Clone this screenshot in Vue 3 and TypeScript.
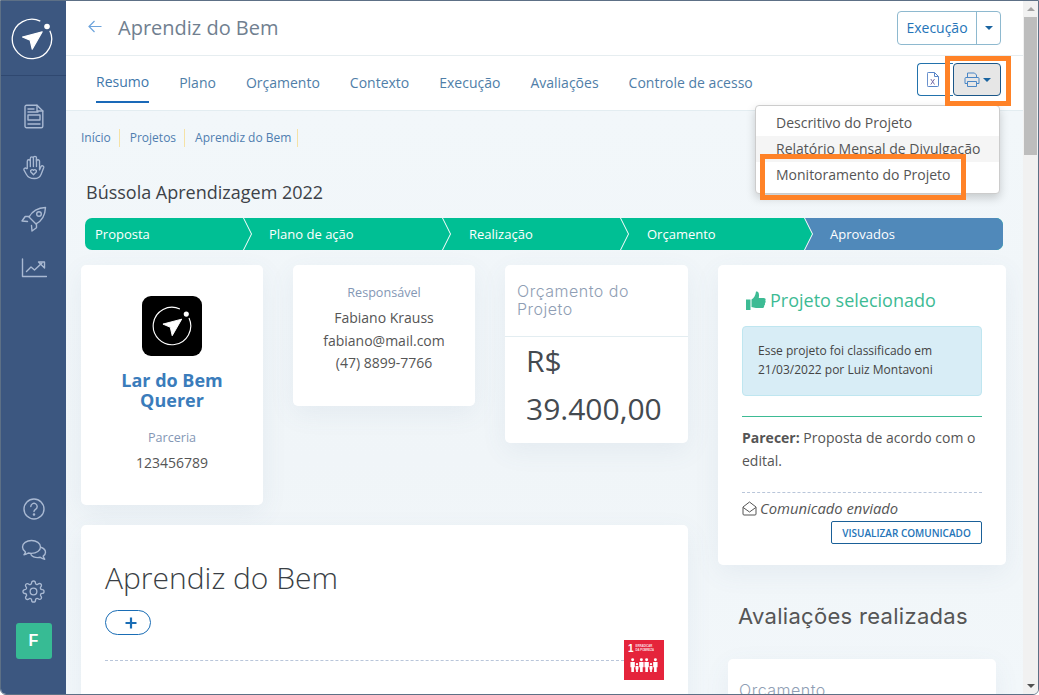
<script setup lang="ts">
const tabs: string[] = ['Resumo', 'Plano', 'Orçamento', 'Contexto', 'Execução', 'Avaliações', 'Controle de acesso']
const crumbs: string[] = ['Início', 'Projetos', 'Aprendiz do Bem']
const steps: string[] = ['Proposta', 'Plano de ação', 'Realização', 'Orçamento', 'Aprovados']
const menu: string[] = ['Descritivo do Projeto', 'Relatório Mensal de Divulgação', 'Monitoramento do Projeto']
const gear =
  'M19.4 15a1.65 1.65 0 0 0 .33 1.82l.06.06a2 2 0 0 1 0 2.83 2 2 0 0 1-2.83 0l-.06-.06a1.65 1.65 0 0 0-1.82-.33 1.65 1.65 0 0 0-1 1.51V21a2 2 0 0 1-2 2 2 2 0 0 1-2-2v-.09A1.65 1.65 0 0 0 9 19.4a1.65 1.65 0 0 0-1.82.33l-.06.06a2 2 0 0 1-2.83 0 2 2 0 0 1 0-2.83l.06-.06a1.65 1.65 0 0 0 .33-1.82 1.65 1.65 0 0 0-1.51-1H3a2 2 0 0 1-2-2 2 2 0 0 1 2-2h.09A1.65 1.65 0 0 0 4.6 9a1.65 1.65 0 0 0-.33-1.82l-.06-.06a2 2 0 0 1 0-2.83 2 2 0 0 1 2.83 0l.06.06a1.65 1.65 0 0 0 1.82.33H9a1.65 1.65 0 0 0 1-1.51V3a2 2 0 0 1 2-2 2 2 0 0 1 2 2v.09a1.65 1.65 0 0 0 1 1.51 1.65 1.65 0 0 0 1.82-.33l.06-.06a2 2 0 0 1 2.83 0 2 2 0 0 1 0 2.83l-.06.06a1.65 1.65 0 0 0-.33 1.82V9a1.65 1.65 0 0 0 1.51 1H21a2 2 0 0 1 2 2 2 2 0 0 1-2 2h-.09a1.65 1.65 0 0 0-1.51 1z'
</script>

<template>
  <div class="window">
    <aside class="sidebar">
      <div class="brand">
        <svg width="42" height="42" viewBox="0 0 42 42" fill="none">
          <path d="M29.3 3.100A19.700 19.700 0 1 0 38.850 12.700" stroke="#fff" stroke-width="1.300" />
          <circle cx="36" cy="8.500" r="2.800" fill="#fff" />
          <path d="M11.500 19 31.200 13.800 21.200 31.200 19.200 22.300Z" fill="#fff" stroke="#fff" stroke-width="1.200" stroke-linejoin="round" />
        </svg>
      </div>
      <nav class="nav-top">
        <svg width="20" height="25" viewBox="0 0 20 25" fill="none" class="ico">
          <path d="M2.500 1.200h10.500l5.800 5.800v15.300a1.500 1.500 0 0 1-1.500 1.500H2.500A1.500 1.500 0 0 1 1 22.300V2.700a1.500 1.500 0 0 1 1.500-1.500Z" />
          <path d="M13 1.200V7h5.800M4 5h6M4 8h10M4 20h12" />
          <rect x="4" y="11" width="12" height="5" />
        </svg>
        <svg width="23" height="25" viewBox="0 0 24 26" fill="none" class="ico">
          <path d="M5.500 14V6.500a1.600 1.600 0 0 1 3.200 0V3.500a1.600 1.600 0 0 1 3.200 0V3a1.600 1.600 0 0 1 3.200 0v3.500a1.600 1.600 0 0 1 3.200 0v9l1.600-3.500a1.500 1.500 0 0 1 2.800 1L20 20c-1.200 3-3.500 4.500-7 4.500-5 0-7-1.500-8.500-4.500L2 15.500a1.500 1.500 0 0 1 2.500-1.500Z" />
          <path d="M8.700 7v5M11.900 4v8M15.100 4v8" />
          <path d="M12 20.500l-3-3a1.700 1.700 0 0 1 3-1.500 1.700 1.700 0 0 1 3 1.500Z" />
        </svg>
        <svg width="26" height="26" viewBox="0 0 26 26" fill="none" class="ico">
          <path d="M8 11C11 5.500 17 1.800 24.500 1.500 24.200 9 20.500 15 15 18l-7-7Z" />
          <circle cx="18" cy="8" r="2.300" />
          <path d="M8.500 10.500H4.200L1 15l5.500.5M15.500 17.500v4.300L11 25l-.5-5.500" />
        </svg>
        <svg width="26" height="20" viewBox="0 0 26 20" fill="none" class="ico">
          <path d="M1.500 1v17.500h24" />
          <path d="M5.500 13.500 10 9l3.500 3 7.500-7" />
          <path d="M17.500 4h6v6Z" />
        </svg>
      </nav>
      <nav class="nav-bottom">
        <svg width="24" height="24" viewBox="0 0 24 24" fill="none" class="ico">
          <circle cx="12" cy="12" r="10" />
          <path d="M8.800 9.500a3.200 3.200 0 1 1 4.800 2.800c-1 .6-1.600 1.200-1.600 2.300" />
          <circle cx="12" cy="17.500" r=".6" />
        </svg>
        <svg width="26" height="23" viewBox="0 0 26 23" fill="none" class="ico">
          <path d="M10.500 1.500C5.500 1.500 1.500 4.200 1.500 8c0 2 1.200 3.700 3 5-.2 1-.8 2-1.500 2.700 1.800-.2 3.200-.9 4.300-1.700 1 .3 2 .4 3.200.4 5 0 9-2.800 9-6.400s-4-6.500-9-6.500Z" />
          <path d="M20.500 8.500c2.500 1 4 2.800 4 4.800 0 1.500-.8 2.900-2.300 3.900.2 1.200.8 2.200 1.500 3-1.800-.3-3.500-1-4.500-1.900-.8.200-1.600.3-2.500.3-3 0-5.500-1.200-6.700-3" />
        </svg>
        <svg width="23" height="23" viewBox="0 0 24 24" fill="none" class="ico">
          <circle cx="12" cy="12" r="3.500" />
          <path :d="gear" />
        </svg>
        <div class="avatar">F</div>
      </nav>
    </aside>

    <div class="main">
      <header class="topbar">
        <svg width="14" height="13" viewBox="0 0 14 13" fill="none" class="back">
          <path d="M13.500 6.500H1M6.500 1 1 6.500 6.500 12" />
        </svg>
        <h1>Aprendiz do Bem</h1>
        <div class="split">
          <span class="split-label">Execução</span>
          <span class="split-caret"><i class="caret"></i></span>
        </div>
      </header>

      <div class="tabbar">
        <a v-for="(t, i) in tabs" :key="t" class="tab" :class="{ active: i === 0 }">{{ t }}</a>
        <div class="tools">
          <button class="tool excel">
            <svg width="12" height="15" viewBox="0 0 12 15" fill="none">
              <path d="M1.200.5h6.300l4 4v9.200a.8.800 0 0 1-.8.800H1.200a.8.800 0 0 1-.8-.8V1.300a.8.800 0 0 1 .8-.8Z" stroke="#5a86c8" />
              <path d="M7.500.5v4h4" stroke="#5a86c8" />
              <path d="M3.800 7l3.700 5.500M7.500 7l-3.700 5.500" stroke="#7a6fa8" />
            </svg>
          </button>
          <button class="tool print">
            <svg width="16" height="15" viewBox="0 0 16 15" fill="none" stroke="#4a86c5">
              <path d="M3.500 5.500V1h7l2 2v2.500M3.500 11.500H1v-5a1 1 0 0 1 1-1h12a1 1 0 0 1 1 1v5h-2.500" />
              <path d="M3.500 9.500h9v5h-9Z" />
            </svg>
            <i class="caret"></i>
          </button>
        </div>
        <ul class="menu">
          <li v-for="(m, i) in menu" :key="m" :class="{ hover: i === 1 }">{{ m }}</li>
        </ul>
        <div class="mark mark-print"></div>
        <div class="mark mark-item"></div>
      </div>

      <section class="page">
        <ol class="crumbs">
          <li v-for="c in crumbs" :key="c">{{ c }}</li>
        </ol>
        <h2 class="program">Bússola Aprendizagem 2022</h2>
        <ol class="stepper">
          <li v-for="(s, i) in steps" :key="s" class="step" :class="{ last: i === 4 }">
            <span>{{ s }}</span>
            <svg v-if="i < 4" class="chev" width="10" height="32" viewBox="0 0 10 32">
              <path d="M0 0 8.500 16 0 32Z" fill="#00bf94" />
              <path d="M.5 0 8.500 16 .5 32" fill="none" stroke="#fff" stroke-width="1" />
            </svg>
          </li>
        </ol>

        <div class="columns">
          <div class="col-left">
            <div class="trio">
              <article class="card org">
                <div class="org-logo">
                  <svg width="40" height="40" viewBox="0 0 42 42" fill="none">
                    <path d="M29.300 3.100A19.700 19.700 0 1 0 38.850 12.700" stroke="#fff" stroke-width="1.200" />
                    <circle cx="36" cy="8.500" r="2.700" fill="#fff" />
                    <path d="M11.500 19 31.200 13.800 21.200 31.200 19.200 22.300Z" fill="#fff" stroke="#fff" stroke-linejoin="round" />
                  </svg>
                </div>
                <h3>Lar do Bem Querer</h3>
                <p class="label">Parceria</p>
                <p class="value">123456789</p>
              </article>
              <article class="card person">
                <p class="label">Responsável</p>
                <p>Fabiano Krauss</p>
                <p>fabiano@mail.com</p>
                <p>(47) 8899-7766</p>
              </article>
              <article class="card budget">
                <h4>Orçamento do Projeto</h4>
                <p>R$ 39.400,00</p>
              </article>
            </div>
            <article class="card project">
              <h2>Aprendiz do Bem</h2>
              <button class="pill">
                <svg width="12" height="12" viewBox="0 0 12 12"><path d="M6 .5v11M.5 6h11" stroke="#1a6db5" stroke-width="2.200" /></svg>
              </button>
              <div class="sdg-row">
                <div class="dash"></div>
                <div class="sdg">
                  <div class="sdg-head"><b>1</b><span>ERRADICAR<br />DA POBREZA</span></div>
                  <svg width="32" height="14" viewBox="0 0 32 16" fill="#fff">
                    <circle cx="3" cy="2" r="1.700" /><path d="M.500 4.500h5v6h-1V16h-3v-5.500h-1Z" />
                    <circle cx="8" cy="7" r="1.300" /><path d="M6.300 9h3.400v4H9v3H7v-3h-.7Z" />
                    <circle cx="13" cy="2" r="1.700" /><path d="M10.500 4.500h5v6h-1V16h-3v-5.500h-1Z" />
                    <circle cx="19" cy="2" r="1.700" /><path d="M16.500 4.500h5v6h-1V16h-3v-5.500h-1Z" />
                    <circle cx="24" cy="7" r="1.300" /><path d="M22.300 9h3.400v4H25v3h-2v-3h-.7Z" />
                    <circle cx="29" cy="2" r="1.700" /><path d="M26.500 4.500h5v6h-1V16h-3v-5.500h-1Z" />
                  </svg>
                </div>
              </div>
            </article>
          </div>

          <div class="col-right">
            <article class="card selected">
              <h3>
                <svg width="20" height="19" viewBox="0 0 20 19" fill="#3dbb94">
                  <path d="M0 8.500h4.500V19H0Z" />
                  <path d="M5.500 8.500c2.500-1.500 4-4 4.500-8 2.500-.5 3.500 1.500 2.800 6.500h5c1.800 0 2.200 1.500 1.500 2.500.6 1 .4 2-.4 2.700.3 1 0 2-.8 2.500.2 1.300-.5 2.300-1.800 2.300H10c-1.800 0-3-1-4.500-1Z" />
                </svg>
                Projeto selecionado
              </h3>
              <div class="alert">Esse projeto foi classificado em 21/03/2022 por Luiz Montavoni</div>
              <p class="opinion"><b>Parecer:</b> Proposta de acordo com o edital.</p>
              <p class="sent">
                <svg width="15" height="15" viewBox="0 0 15 15" fill="none" stroke="#555">
                  <path d="M1 6 7.500 1 14 6v7a1 1 0 0 1-1 1H2a1 1 0 0 1-1-1Z" />
                  <path d="M1.200 6.500 7.500 11l6.300-4.500" />
                </svg>
                <em>Comunicado enviado</em>
              </p>
              <div class="sent-action"><button class="outline">VISUALIZAR COMUNICADO</button></div>
            </article>
            <h2 class="reviews">Avaliações realizadas</h2>
            <article class="card review">
              <p>Orçamento</p>
            </article>
          </div>
        </div>
      </section>
    </div>

    <div class="scrollbar">
      <i class="arrow up"></i>
      <div class="thumb"></div>
      <i class="arrow down"></i>
    </div>
  </div>
</template>

<style>
html, body { margin: 0; overflow: hidden; }
</style>

<style scoped>
* { box-sizing: border-box; }
h1, h2, h3, h4, p, ul, ol { margin: 0; padding: 0; font-weight: normal; list-style: none; }
.window {
  width: 1039px; height: 695px; display: flex; overflow: hidden; position: relative;
  border: 1px solid #5d7086; border-radius: 0 0 6px 6px;
  font-family: "Open Sans", sans-serif; font-size: 14px; color: #555; background: #fff;
}
.sidebar { width: 65px; flex: none; background: #3c5780; display: flex; flex-direction: column; }
.brand { height: 75px; flex: none; border-bottom: 1px solid #2f4870; display: flex; align-items: center; justify-content: center; padding: 1px 3px 0 0; }
.ico { stroke: #a9b9d2; stroke-width: 1.4; stroke-linejoin: round; stroke-linecap: round; }
.nav-top { display: flex; flex-direction: column; align-items: center; padding-top: 28px; gap: 26px; }
.nav-bottom { margin-top: auto; display: flex; flex-direction: column; align-items: center; gap: 18px; padding-bottom: 35px; }
.avatar { width: 36px; height: 36px; margin-top: 2px; border-radius: 3px; background: #37bb94; color: #fff; font-weight: 700; font-size: 16px; display: flex; align-items: center; justify-content: center; font-family: "Liberation Sans", sans-serif; }

.main { width: 957px; flex: none; display: flex; flex-direction: column; background: #f2f7fa; position: relative; }
.topbar { height: 55px; flex: none; background: #fff; border-bottom: 1px solid #e6edf0; display: flex; align-items: center; padding: 0 22px 0 22px; }
.back { stroke: #6ea4dc; stroke-width: 1.200; margin-bottom: 3px; }
h1 { margin-left: 16px; font-size: 20px; color: #717f90; flex: 1; margin-bottom: 1px; }
.split { display: flex; height: 34px; width: 104px; border: 1px solid #8eb9cf; border-radius: 4px; color: #2474b8; margin-top: -1px; }
.split-label { width: 79px; display: flex; align-items: center; justify-content: center; border-right: 1px solid #8eb9cf; }
.split-caret { flex: 1; display: flex; align-items: center; justify-content: center; }
.caret { display: inline-block; width: 0; height: 0; border: 4px solid transparent; border-top-color: #1a64a0; border-bottom: 0; }

.tabbar { height: 55px; flex: none; background: #fff; border-bottom: 1px solid #e3edf1; display: flex; padding: 0 22px 0 30px; gap: 30px; position: relative; }
.tab { height: 47px; display: flex; align-items: center; padding-top: 6px; color: #4f7ea8; white-space: nowrap; }
.tab.active { color: #3f78ab; border-bottom: 2px solid #1a69b8; }
.tools { margin-left: auto; display: flex; margin-top: 7px; height: 33px; }
.tool { height: 33px; padding: 0; background: #fff; display: flex; align-items: center; justify-content: center; }
.excel { width: 36px; border: 1px solid #2272ac; border-right: 0; border-radius: 4px 0 0 4px; padding-right: 5px; }
.print { width: 48px; gap: 3px; border: 1px solid #1a5688; background: #e6e6e6; border-radius: 4px; }
.menu { position: absolute; left: 689px; top: 49px; width: 245px; height: 89px; padding: 4px 0; background: #fff; border: 1px solid #ccc; border-radius: 4px; box-shadow: 0 4px 10px rgba(0, 0, 0, .18); z-index: 2; }
.menu li { height: 26px; line-height: 26px; padding-left: 20px; color: #555; }
.menu li.hover { background: #f5f5f5; }
.mark { position: absolute; border: 5px solid #ff8227; z-index: 3; }
.mark-print { left: 879px; top: 0; width: 66px; height: 50px; }
.mark-item { left: 694px; top: 98px; width: 206px; height: 46px; }

.page { flex: 1; min-height: 0; padding: 0 16px 0 15px; background: linear-gradient(180deg, #f2f7fa 0%, #f0f5f8 60%, #f2f7fa 100%); }
.crumbs { display: flex; font-size: 12px; color: #4f7eb0; padding-top: 18px; height: 45px; }
.crumbs li { height: 18px; line-height: 18px; padding-right: 8px; margin-right: 10px; border-right: 1px solid #f5e2a6; }
.crumbs li:last-child { padding-right: 6px; }
.program { font-size: 18px; color: #3d4248; padding: 22px 0 0 5px; height: 62px; line-height: 28px; }
.stepper { display: grid; grid-template-columns: 159px 199px 178px 184px 198px; margin-left: 4px; height: 32px; background: #00bf94; border-radius: 7px; width: 918px; color: #fff; font-size: 13px; }
.step { display: flex; align-items: center; padding-left: 25px; position: relative; }
.step:first-child { padding-left: 10px; }
.step:nth-child(3), .step:nth-child(4) { padding-left: 26px; }
.step.last { background: #5089ba; border-radius: 0 7px 7px 0; }
.chev { position: absolute; right: -9px; top: 0; z-index: 1; }

.columns { display: flex; gap: 30px; padding-top: 15px; }
.col-left { width: 607px; flex: none; }
.col-right { width: 288px; flex: none; }
.card { background: #fff; border-radius: 5px; box-shadow: 0 8px 26px rgba(90, 120, 150, .08); }
.trio { display: grid; grid-template-columns: 182px 182px 183px; gap: 30px; align-items: start; height: 240px; }
.label { font-size: 12.600px; color: #8497b5; }
.org { height: 240px; padding: 31px 12px 0; text-align: center; }
.org-logo { width: 60px; height: 60px; margin: 0 auto; background: #000; border-radius: 9px; display: flex; align-items: center; justify-content: center; }
.org h3 { font-size: 18px; font-weight: 700; line-height: 20px; color: #3a7cbb; margin-top: 14px; }
.org .label { margin-top: 19px; line-height: 18px; }
.org .value { margin-top: 6px; line-height: 20px; }
.person { height: 141px; padding-top: 19px; text-align: center; line-height: 22.500px; }
.person .label { line-height: 18px; margin-bottom: 5px; }
.budget { height: 178px; }
.budget h4 { height: 72px; padding: 17px 40px 0 12px; font-family: "Inter", sans-serif; font-weight: 300; font-size: 16px; letter-spacing: .5px; line-height: 18px; color: #8f9eb4; border-bottom: 1px solid #e3edf1; }
.budget p { padding: 0 12px 0 21px; font-size: 30px; line-height: 48px; color: #444a50; }
.project { height: 200px; margin-top: 20px; padding: 33px 24px 0; position: relative; }
.project h2 { font-size: 30px; font-weight: 300; color: #3a3f45; line-height: 40px; }
.pill { display: flex; align-items: center; justify-content: center; width: 46px; height: 25px; margin-top: 12px; padding: 0 0 0 5px; background: #fff; border: 1px solid #1a6db5; border-radius: 13px; }
.sdg-row { display: flex; align-items: center; margin-top: 5px; width: 559px; }
.dash { flex: 1; border-top: 1px dashed #b9c6da; }
.sdg { width: 40px; height: 40px; background: #e5243b; color: #fff; padding: 4px 4px 0; display: flex; flex-direction: column; gap: 4px; }
.sdg-head { display: flex; gap: 2px; height: 10px; }
.sdg-head b { font-size: 10px; line-height: 9px; font-family: "Liberation Sans", sans-serif; }
.sdg-head span { font-size: 2.800px; line-height: 3.500px; padding-top: 1px; white-space: nowrap; font-family: "Liberation Sans", sans-serif; font-weight: 700; opacity: .85; }
.selected { height: 300px; padding: 21px 24px 0; }
.selected h3 { display: flex; align-items: center; gap: 4px; font-size: 18px; line-height: 28px; color: #3dbb94; padding-left: 4px; }
.alert { margin-top: 12px; height: 70px; padding: 14px 15px; font-size: 12px; line-height: 19px; color: #444; background: #d8edf6; border: 1px solid #bfe6f0; border-radius: 4px; }
.opinion { margin-top: 20px; padding-top: 9px; height: 77px; border-top: 1px solid #3dbb94; border-bottom: 1px dashed #b9c6da; line-height: 23px; }
.sent { display: flex; align-items: center; gap: 3px; height: 31px; padding-bottom: 1px; }
.sent em { font-size: 14.800px; white-space: nowrap; }
.sent-action { display: flex; justify-content: flex-end; margin-top: -3px; }
.outline { width: 151px; height: 23px; padding: 0; background: #fff; border: 1px solid #1a6098; border-radius: 2px; color: #2474b8; font-family: inherit; font-size: 10px; font-weight: 600; }
.reviews { font-family: "Inter", sans-serif; font-size: 22px; letter-spacing: .3px; color: #555; padding: 37px 0 0 20px; height: 94px; line-height: 28px; }
.review { width: 268px; height: 60px; margin-left: 10px; padding: 21px 11px 0; }
.review p { font-family: "Inter", sans-serif; font-weight: 300; font-size: 16px; letter-spacing: .5px; color: #8f9eb4; line-height: 20px; }

.scrollbar { flex: 1; background: #f1f1f1; position: relative; display: flex; flex-direction: column; align-items: center; padding-top: 6px; }
.thumb { width: 13px; height: 138px; margin-top: 6px; background: #bdbdbd; }
.arrow { width: 0; height: 0; border: 4px solid transparent; }
.arrow.up { border-top: 0; border-bottom-color: #a3a3a3; }
.arrow.down { border-bottom: 0; border-top-color: #505050; position: absolute; bottom: 6px; }
</style>
